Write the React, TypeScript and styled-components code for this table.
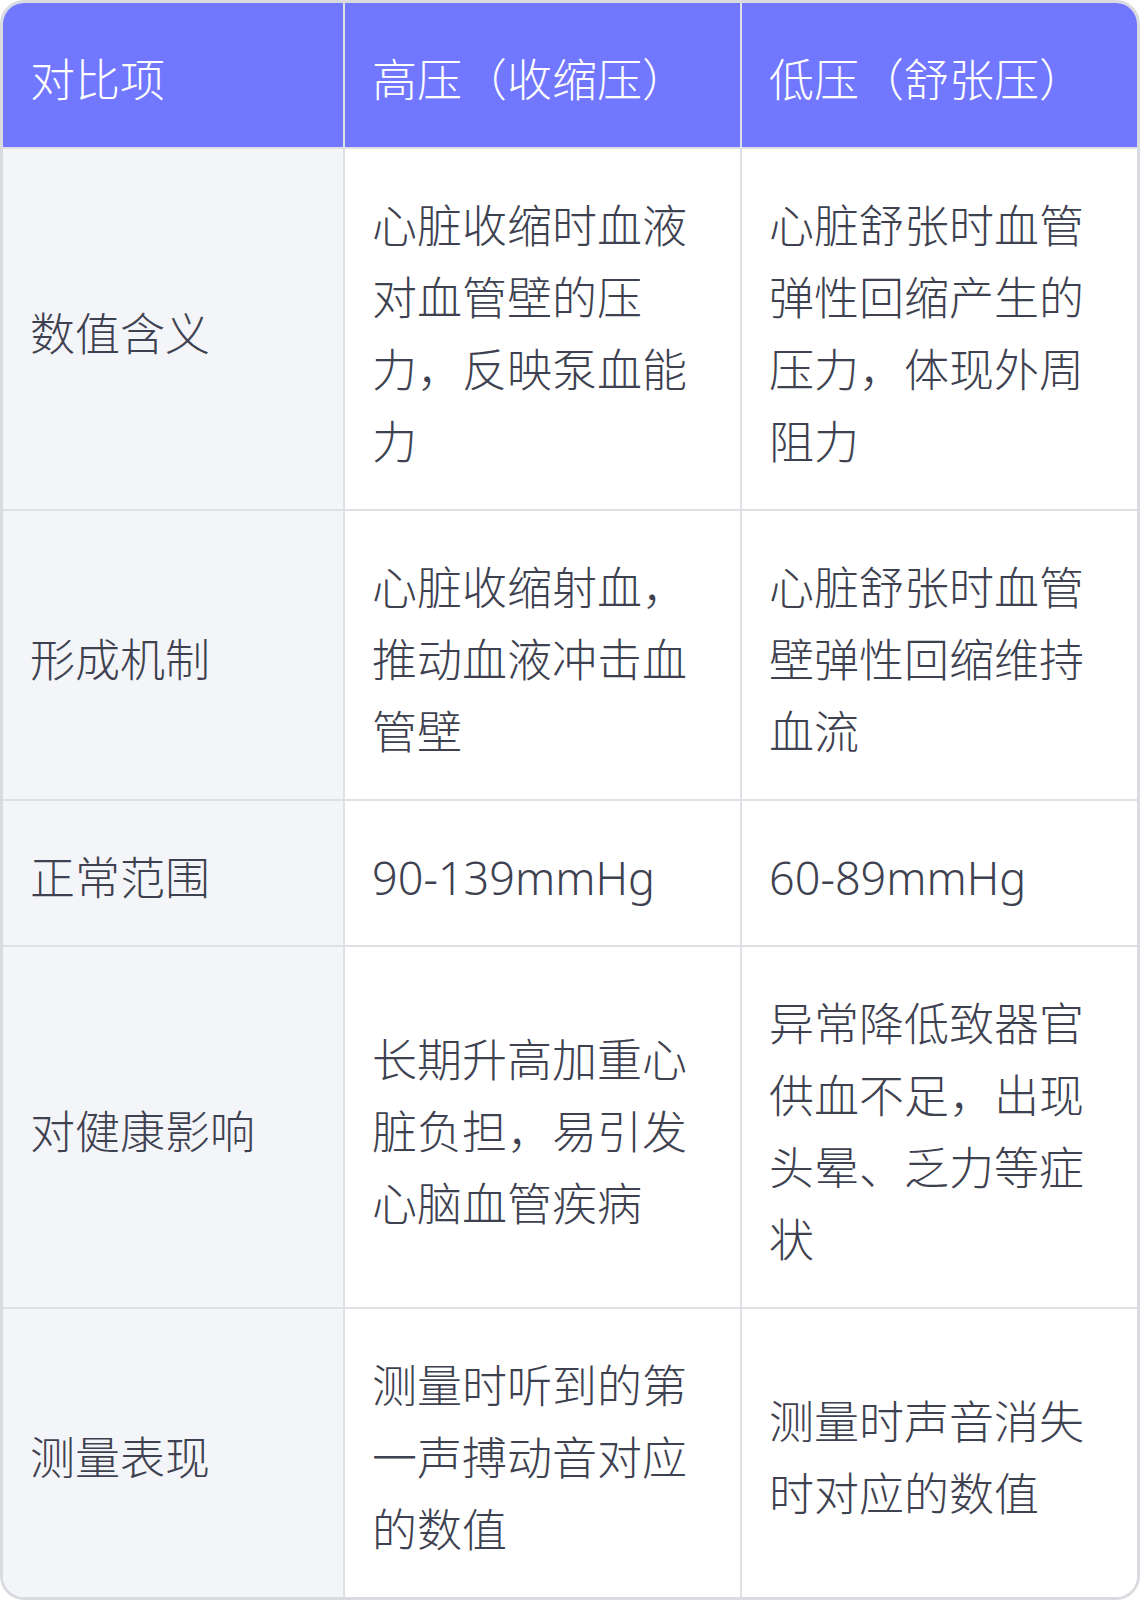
import styled, { createGlobalStyle } from "styled-components";

const GlobalStyle = createGlobalStyle`
  html, body {
    margin: 0;
    padding: 0;
    background: #ffffff;
  }
  body {
    font-family: "Noto Sans", "Noto Sans CJK SC", sans-serif;
  }
`;

const Table = styled.div`
  display: grid;
  grid-template-columns: 342px 397px 1fr;
  width: 1140px;
  box-sizing: border-box;
  border: 3px solid #dadbe0;
  border-radius: 24px;
  overflow: hidden;
  background: #ffffff;
`;

const Cell = styled.div<{ head?: boolean; label?: boolean; lastCol?: boolean; lastRow?: boolean }>`
  display: flex;
  align-items: center;
  box-sizing: border-box;
  padding: 41px 26px 31px 27px;
  font-size: 45px;
  line-height: 72px;
  font-weight: 300;
  color: ${({ head }) => (head ? "#ffffff" : "#3e4150")};
  background: ${({ head, label }) =>
    head ? "#7177ff" : label ? "#f4f5f9" : "#ffffff"};
  border-right: ${({ lastCol }) => (lastCol ? "none" : "2px solid #dfe0e5")};
  border-bottom: ${({ lastRow }) => (lastRow ? "none" : "2px solid #dfe0e5")};
  word-break: break-all;
`;

const header = ["对比项", "高压（收缩压）", "低压（舒张压）"];

const rows: string[][] = [
  ["数值含义", "心脏收缩时血液对血管壁的压力，反映泵血能力", "心脏舒张时血管弹性回缩产生的压力，体现外周阻力"],
  ["形成机制", "心脏收缩射血，推动血液冲击血管壁", "心脏舒张时血管壁弹性回缩维持血流"],
  ["正常范围", "90-139mmHg", "60-89mmHg"],
  ["对健康影响", "长期升高加重心脏负担，易引发心脑血管疾病", "异常降低致器官供血不足，出现头晕、乏力等症状"],
  ["测量表现", "测量时听到的第一声搏动音对应的数值", "测量时声音消失时对应的数值"],
];

export default function App() {
  return (
    <>
      <GlobalStyle />
      <Table>
        {header.map((h, i) => (
          <Cell key={h} head lastCol={i === 2}>
            {h}
          </Cell>
        ))}
        {rows.map((row, r) =>
          row.map((text, c) => (
            <Cell
              key={`${r}-${c}`}
              label={c === 0}
              lastCol={c === 2}
              lastRow={r === rows.length - 1}
            >
              {text}
            </Cell>
          ))
        )}
      </Table>
    </>
  );
}
